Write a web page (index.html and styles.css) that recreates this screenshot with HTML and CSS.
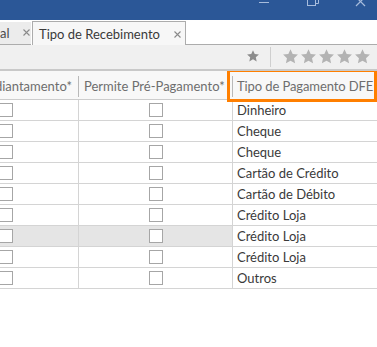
FILE: index.html
```html
<!DOCTYPE html>
<html lang="pt-BR">
<head>
<meta charset="utf-8">
<title>Tipo de Recebimento</title>
<link rel="stylesheet" href="styles.css">
</head>
<body>
<div class="window">
  <div class="titlebar">
    <svg class="controls" width="127" height="20" viewBox="0 0 127 20">
      <line x1="9" y1="2.5" x2="19" y2="2.5" stroke="#a7bcdc" stroke-width="1"/>
      <rect x="57.5" y="-3.5" width="8" height="9" fill="none" stroke="#a7bcdc" stroke-width="1"/>
      <polyline points="60.5,-3.5 60.5,-5.5 68.5,-5.5 68.5,3.5 65.5,3.5" fill="none" stroke="#a7bcdc" stroke-width="1"/>
      <line x1="106" y1="-3" x2="115" y2="6" stroke="#a7bcdc" stroke-width="1.2"/>
      <line x1="115" y1="-3" x2="106" y2="6" stroke="#a7bcdc" stroke-width="1.2"/>
    </svg>
  </div>
  <div class="tabbar">
    <div class="tab tab-inactive">
      <span class="tab-label">al</span>
      <svg class="tab-close" width="7" height="7" viewBox="0 0 7 7"><path d="M0.5 0.5 L6.5 6.5 M6.5 0.5 L0.5 6.5" stroke="#8a8a8a" stroke-width="1.1"/></svg>
    </div>
    <div class="tab tab-active">
      <span class="tab-label">Tipo de Recebimento</span>
      <svg class="tab-close" width="7" height="7" viewBox="0 0 7 7"><path d="M0.5 0.5 L6.5 6.5 M6.5 0.5 L0.5 6.5" stroke="#8a8a8a" stroke-width="1.1"/></svg>
    </div>
    <div class="tab-fill"></div>
  </div>
  <div class="toolbar">
    <svg class="star-single" width="12" height="12" viewBox="0 0 15 15">
      <polygon fill="#8c8c8c" points="7.5,0.2 9.67,5.01 14.92,5.59 11.02,9.14 12.09,14.31 7.5,11.7 2.91,14.31 3.98,9.14 0.08,5.59 5.33,5.01"/>
    </svg>
    <div class="tool-sep"></div>
    <svg class="stars" width="87" height="15" viewBox="0 0 87 15">
      <defs>
        <polygon id="st" points="7.5,0.2 9.67,5.01 14.92,5.59 11.02,9.14 12.09,14.31 7.5,11.7 2.91,14.31 3.98,9.14 0.08,5.59 5.33,5.01"/>
      </defs>
      <g fill="#b3b3b3">
        <use href="#st" x="0"/>
        <use href="#st" x="18"/>
        <use href="#st" x="36"/>
        <use href="#st" x="54"/>
        <use href="#st" x="72"/>
      </g>
    </svg>
  </div>
  <div class="grid-viewport">
    <div class="grid">
      <div class="row header">
        <div class="hcell">Permite Adiantamento*</div>
        <div class="hcell hsep">Permite Pré-Pagamento*</div>
        <div class="hcell hsep last focused">Tipo de Pagamento DFE</div>
      </div>
      <div class="row"><div class="cell center"><span class="check"></span></div><div class="cell center sep"><span class="check"></span></div><div class="cell sep last">Dinheiro</div></div>
      <div class="row"><div class="cell center"><span class="check"></span></div><div class="cell center sep"><span class="check"></span></div><div class="cell sep last">Cheque</div></div>
      <div class="row"><div class="cell center"><span class="check"></span></div><div class="cell center sep"><span class="check"></span></div><div class="cell sep last">Cheque</div></div>
      <div class="row"><div class="cell center"><span class="check"></span></div><div class="cell center sep"><span class="check"></span></div><div class="cell sep last">Cartão de Crédito</div></div>
      <div class="row"><div class="cell center"><span class="check"></span></div><div class="cell center sep"><span class="check"></span></div><div class="cell sep last">Cartão de Débito</div></div>
      <div class="row"><div class="cell center"><span class="check"></span></div><div class="cell center sep"><span class="check"></span></div><div class="cell sep last">Crédito Loja</div></div>
      <div class="row hover"><div class="cell center"><span class="check"></span></div><div class="cell center sep"><span class="check"></span></div><div class="cell sep last plain">Crédito Loja</div></div>
      <div class="row"><div class="cell center"><span class="check"></span></div><div class="cell center sep"><span class="check"></span></div><div class="cell sep last">Crédito Loja</div></div>
      <div class="row"><div class="cell center"><span class="check"></span></div><div class="cell center sep"><span class="check"></span></div><div class="cell sep last">Outros</div></div>
    </div>
  </div>
</div>
</body>
</html>
```
FILE: styles.css
```css
html, body {
  margin: 0;
  padding: 0;
  background: #ffffff;
}
body {
  width: 377px;
  height: 347px;
  overflow: hidden;
  font-family: Lato, "Liberation Sans", sans-serif;
  font-size: 13px;
  color: #3a3a3a;
}
.window {
  display: flex;
  flex-direction: column;
  width: 377px;
  height: 347px;
  overflow: hidden;
}
.titlebar {
  height: 20px;
  background: #2b5797;
  display: flex;
  justify-content: flex-end;
  flex: none;
}
.controls {
  display: block;
  overflow: visible;
}
.tabbar {
  height: 25px;
  display: flex;
  align-items: flex-end;
  background: #ffffff;
  flex: none;
}
.tab {
  display: flex;
  align-items: center;
  box-sizing: border-box;
}
.tab-inactive {
  width: 31px;
  height: 23px;
  background: #ececec;
  border-bottom: 1px solid #acacac;
  padding-bottom: 1px;
}
.tab-inactive .tab-label {
  color: #4a4a4a;
}
.tab-inactive .tab-close {
  margin-left: 13px;
}
.tab-active {
  margin-left: 1px;
  width: 154px;
  height: 24px;
  background: #f7f7f7;
  border: 1px solid #acacac;
  border-bottom: none;
  padding-left: 6px;
  padding-top: 1px;
}
.tab-active .tab-label {
  color: #3a3a3a;
}
.tab-active .tab-close {
  margin-left: 14px;
}
.tab-close {
  display: block;
  flex: none;
}
.tab-fill {
  flex: 1;
  height: 0;
  border-bottom: 1px solid #acacac;
}
.toolbar {
  height: 24px;
  background: #f0f0f0;
  border-bottom: 2px solid #c9c9c9;
  display: flex;
  align-items: center;
  justify-content: flex-end;
  padding-right: 7px;
  flex: none;
}
.star-single {
  display: block;
  margin-top: -3px;
}
.tool-sep {
  width: 1px;
  height: 20px;
  background: #cfcfcf;
  margin: 0 12px 0 11px;
}
.stars {
  display: block;
  margin-top: -1px;
}
.grid-viewport {
  flex: 1;
  overflow: hidden;
}
.grid {
  margin-left: -66px;
  width: 443px;
}
.row {
  display: grid;
  grid-template-columns: 144px 154px 145px;
  height: 21px;
  box-sizing: border-box;
  border-bottom: 1px solid #d4d4d4;
}
.row.header {
  height: 29px;
  background: #f8f8f8;
  border-bottom: 1px solid #cccccc;
}
.hcell {
  position: relative;
  align-self: end;
  height: 21px;
  line-height: 21px;
  margin-bottom: 2px;
  padding-left: 5px;
  color: #6e6e6e;
  white-space: nowrap;
  box-sizing: border-box;
}
.hsep {
  border-left: 1px solid #b9b9b9;
}
.hcell.last {
  padding-left: 4px;
  letter-spacing: -0.1px;
}
.focused::after {
  content: "";
  position: absolute;
  left: -6px;
  top: -7px;
  right: 0;
  bottom: -5px;
  border: 3px solid #ff7f00;
}
.cell {
  box-sizing: border-box;
  line-height: 20px;
  padding-left: 5px;
  white-space: nowrap;
  display: flex;
  align-items: center;
}
.cell.last {
  padding-left: 4px;
}
.cell.center {
  justify-content: center;
  padding-left: 0;
}
.sep {
  border-left: 1px solid #d4d4d4;
}
.row.hover .cell {
  background: #e5e5e5;
}
.row.hover .cell.plain {
  background: #ffffff;
}
.check {
  display: block;
  width: 14px;
  height: 14px;
  box-sizing: border-box;
  border: 1px solid #a6a6a6;
  background: #ffffff;
}
```
